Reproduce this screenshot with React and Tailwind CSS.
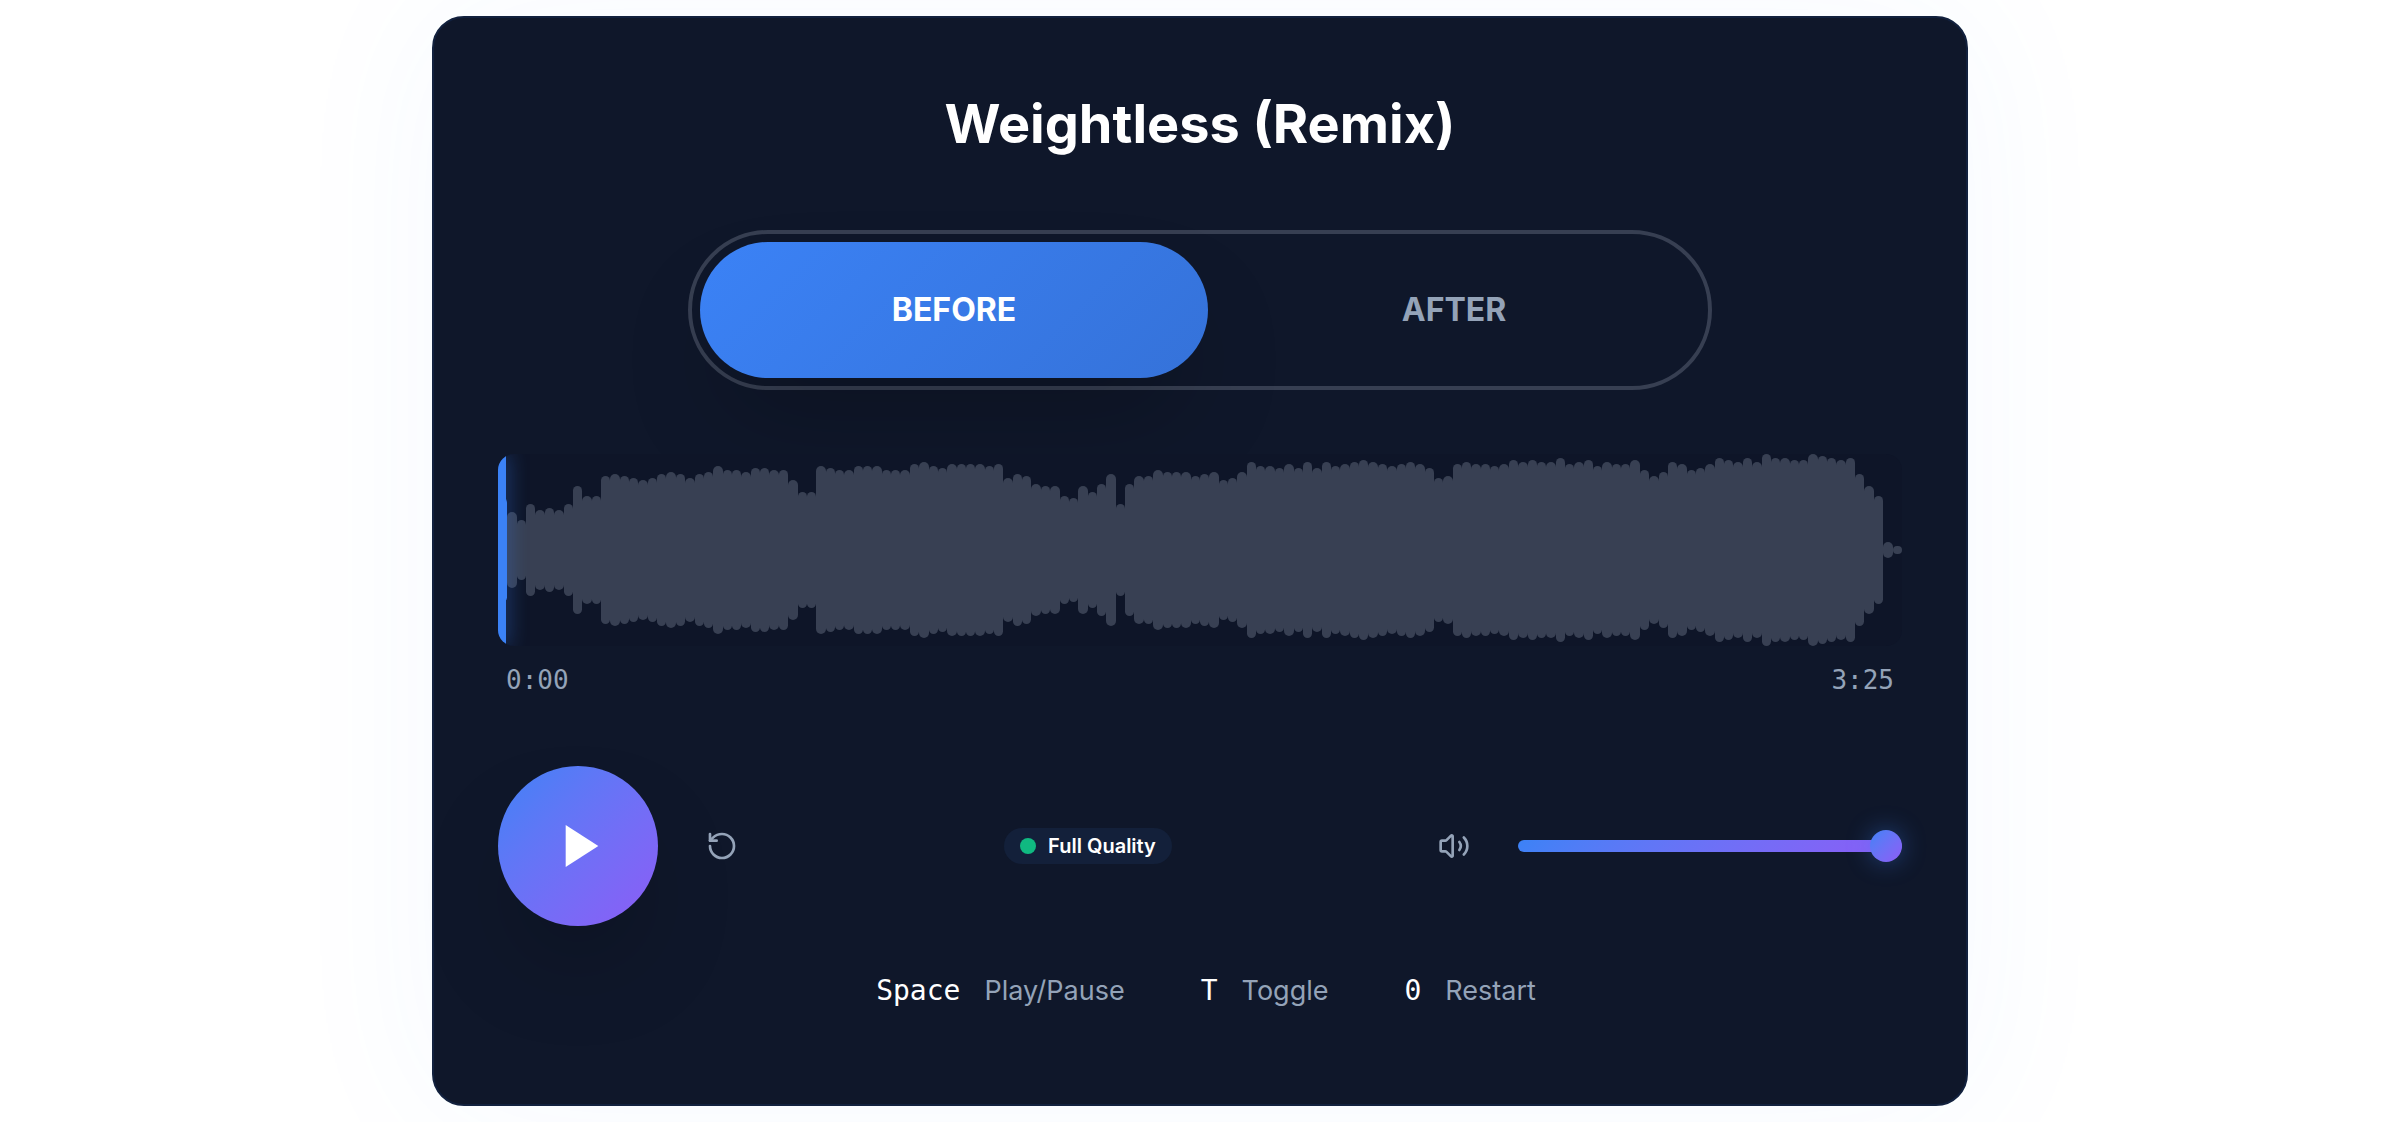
import { useRef, useState } from "react";
import { RotateCcw } from "lucide-react";

const DURATION = 205;
const PEAK_MAX = 48;

const peaks = [
  26, 19, 15, 23, 20, 21, 20, 23, 32, 27, 27, 37, 38, 37, 36, 35, 36, 38, 39, 38, 36, 38, 39, 42, 40,
  40, 39, 41, 41, 40, 40, 35, 29, 29, 42, 41, 40, 40, 42, 42, 42, 40, 40, 40, 43, 44, 42, 41, 43, 43,
  43, 43, 42, 43, 36, 38, 37, 33, 32, 32, 27, 26, 32, 29, 33, 38, 23, 33, 37, 37, 40, 39, 39, 39, 37,
  38, 39, 35, 36, 39, 44, 42, 42, 41, 43, 41, 44, 41, 44, 42, 43, 44, 45, 44, 43, 42, 43, 44, 43, 41,
  36, 37, 43, 44, 43, 43, 42, 43, 45, 44, 45, 44, 44, 46, 43, 44, 45, 42, 44, 43, 43, 45, 40, 37, 39,
  44, 43, 40, 41, 43, 46, 45, 44, 46, 44, 48, 46, 46, 45, 45, 48, 47, 46, 45, 46, 38, 32, 27, 4, 2
];

const shortcuts = [
  { keyName: "Space", label: "Play/Pause" },
  { keyName: "T", label: "Toggle" },
  { keyName: "0", label: "Restart" }
];

const formatTime = (seconds) =>
  `${Math.floor(seconds / 60)}:${String(Math.floor(seconds % 60)).padStart(2, "0")}`;

const VersionToggle = ({ version, onChange }) => {
  const active = "bg-linear-135 from-[#3b82f6] to-[#3572d9] text-white shadow-[0_50px_100px_-24px_rgba(0,0,0,0.25)]";

  return (
    <div className="mx-auto grid w-full max-w-5xl grid-cols-[508fr_492fr] rounded-full border-4 border-[#373f52] p-2">
      {["before", "after"].map((name) => (
        <button
          key={name}
          type="button"
          onClick={() => onChange(name)}
          aria-pressed={version === name}
          className={`h-[136px] rounded-full text-[32px] font-bold uppercase ${
            version === name ? active : "text-[#94a3b8]"
          }`}
        >
          {name}
        </button>
      ))}
    </div>
  );
};

const Waveform = ({ time, onSeek }) => {
  const ref = useRef(null);
  const current = Math.floor((time / DURATION) * peaks.length);

  const handleClick = (event) => {
    const rect = ref.current.getBoundingClientRect();
    onSeek(((event.clientX - rect.left) / rect.width) * DURATION);
  };

  return (
    <div
      ref={ref}
      onClick={handleClick}
      className="relative flex h-48 cursor-pointer items-center overflow-hidden rounded-2xl bg-[#0e1528]"
    >
      {peaks.map((peak, index) => (
        <div
          key={index}
          className={`flex-1 rounded-full ${index <= current ? "bg-[#3b82f6]" : "bg-[#384053]"}`}
          style={{ height: `${(peak / PEAK_MAX) * 100}%` }}
        />
      ))}
      <div
        className="absolute inset-y-0 w-2 bg-[#3b82f6] shadow-[0_0_20px_rgba(59,130,246,0.6)]"
        style={{ left: `${(time / DURATION) * 100}%` }}
      />
    </div>
  );
};

const VolumeIcon = () => (
  <svg
    viewBox="0 0 24 24"
    className="size-8"
    fill="none"
    stroke="currentColor"
    strokeWidth="2"
    strokeLinecap="round"
    strokeLinejoin="round"
  >
    <path d="M11 4.7a.7.7 0 0 0-1.2-.5L6.4 7.6A1.4 1.4 0 0 1 5.4 8H3a1 1 0 0 0-1 1v6a1 1 0 0 0 1 1h2.4a1.4 1.4 0 0 1 1 .4l3.4 3.4a.7.7 0 0 0 1.2-.5z" />
    <path d="M16 9a5 5 0 0 1 0 6" />
    <path d="M19.364 18.364a9 9 0 0 0 0-12.728" />
  </svg>
);

const IconButton = ({ label, onClick, children }) => (
  <button
    type="button"
    aria-label={label}
    onClick={onClick}
    className="flex size-20 items-center justify-center rounded-full text-[#94a3b8] hover:text-white"
  >
    {children}
  </button>
);

const VolumeControl = ({ volume, onChange }) => (
  <div className="flex items-center gap-6">
    <IconButton label="Mute" onClick={() => onChange(volume ? 0 : 100)}>
      <VolumeIcon />
    </IconButton>
    <input
      type="range"
      min="0"
      max="100"
      value={volume}
      onChange={(event) => onChange(Number(event.target.value))}
      aria-label="Volume"
      className="h-3 w-96 appearance-none rounded-full bg-linear-135 from-[#3b82f6] to-[#8b5cf6] [&::-webkit-slider-thumb]:size-8 [&::-webkit-slider-thumb]:appearance-none [&::-webkit-slider-thumb]:rounded-full [&::-webkit-slider-thumb]:bg-linear-135 [&::-webkit-slider-thumb]:from-[#3b82f6] [&::-webkit-slider-thumb]:to-[#8b5cf6] [&::-webkit-slider-thumb]:shadow-[0_0_24px_rgba(59,130,246,0.4)]"
    />
  </div>
);

const App = () => {
  const [version, setVersion] = useState("before");
  const [playing, setPlaying] = useState(false);
  const [time, setTime] = useState(0);
  const [volume, setVolume] = useState(100);

  return (
    <div className="overflow-hidden bg-white px-8 py-4 font-['Inter',sans-serif]">
      <main className="mx-auto max-w-[1536px] rounded-[32px] border-2 border-[#12213e] bg-[#0f172a] p-16 shadow-[0_0_160px_rgba(59,130,246,0.05)]">
        <h1 className="mb-16 text-center text-[54px] leading-[84px] font-bold text-white">Weightless (Remix)</h1>

        <VersionToggle version={version} onChange={setVersion} />

        <div className="mt-16">
          <Waveform time={time} onSeek={setTime} />
          <div className="mt-4 flex justify-between px-2 font-['DejaVu_Sans_Mono',monospace] text-[26px] leading-9 text-[#94a3b8]">
            <span>{formatTime(time)}</span>
            <span>{formatTime(DURATION)}</span>
          </div>
        </div>

        <div className="mt-17 flex items-center justify-between">
          <div className="flex items-center gap-6">
            <button
              type="button"
              aria-label={playing ? "Pause" : "Play"}
              onClick={() => setPlaying(!playing)}
              className="flex size-40 items-center justify-center rounded-full bg-linear-135 from-[#3b82f6] to-[#8b5cf6] text-white shadow-[0_50px_100px_-24px_rgba(0,0,0,0.25)]"
            >
              {playing ? (
                <svg viewBox="0 0 24 24" className="size-14" fill="currentColor">
                  <rect x="6" y="4" width="4" height="16" />
                  <rect x="14" y="4" width="4" height="16" />
                </svg>
              ) : (
                <svg viewBox="0 0 24 24" className="ml-2 size-14" fill="currentColor">
                  <polygon points="5 3 19 12 5 21" />
                </svg>
              )}
            </button>
            <IconButton label="Restart" onClick={() => setTime(0)}>
              <RotateCcw size={32} />
            </IconButton>
          </div>

          <div className="flex h-9 items-center gap-3 rounded-full bg-[#13203a] px-4 text-xl font-semibold text-white">
            <span className="size-4 rounded-full bg-[#10b981]" />
            Full Quality
          </div>

          <VolumeControl volume={volume} onChange={setVolume} />
        </div>

        <div className="mt-11 flex justify-center gap-16 pb-7 text-[27px] leading-[42px] text-[#94a3b8]">
          {shortcuts.map(({ keyName, label }) => (
            <div key={keyName} className="flex items-center gap-3">
              <kbd className="px-3 font-['DejaVu_Sans_Mono',monospace] text-[28px] text-white">{keyName}</kbd>
              <span>{label}</span>
            </div>
          ))}
        </div>
      </main>
    </div>
  );
};

export default App;
